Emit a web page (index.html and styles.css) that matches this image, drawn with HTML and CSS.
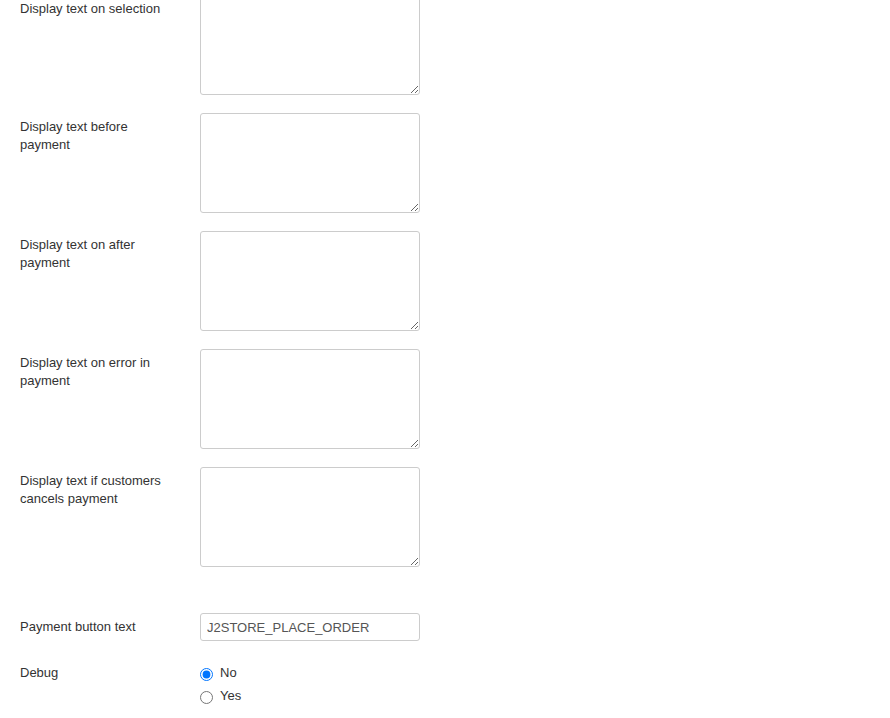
FILE: index.html
```html
<!DOCTYPE html>
<html>
<head>
<meta charset="utf-8">
<link rel="stylesheet" href="styles.css">
</head>
<body>
<form class="form">
  <div class="control-group">
    <label class="control-label">Display text on selection</label>
    <div class="controls"><textarea class="area"></textarea></div>
  </div>
  <div class="control-group">
    <label class="control-label">Display text before payment</label>
    <div class="controls"><textarea class="area"></textarea></div>
  </div>
  <div class="control-group">
    <label class="control-label">Display text on after payment</label>
    <div class="controls"><textarea class="area"></textarea></div>
  </div>
  <div class="control-group">
    <label class="control-label">Display text on error in payment</label>
    <div class="controls"><textarea class="area"></textarea></div>
  </div>
  <div class="control-group">
    <label class="control-label">Display text if customers cancels payment</label>
    <div class="controls"><textarea class="area"></textarea></div>
  </div>
  <div class="control-group spaced">
    <label class="control-label">Payment button text</label>
    <div class="controls"><input class="text-input" type="text" value="J2STORE_PLACE_ORDER"></div>
  </div>
  <div class="control-group">
    <label class="control-label">Debug</label>
    <div class="controls radios">
      <label class="radio"><input type="radio" name="debug" checked> <span>No</span></label>
      <label class="radio"><input type="radio" name="debug"> <span>Yes</span></label>
    </div>
  </div>
</form>
</body>
</html>
```
FILE: styles.css
```css
html, body {
  margin: 0;
  padding: 0;
  background: #fff;
}
body {
  font-family: "Liberation Sans", Arial, Helvetica, sans-serif;
  font-size: 13px;
  line-height: 18px;
  color: #333;
}
.form {
  margin: -5px 0 0 0;
  padding: 0 20px;
}
.control-group {
  display: flex;
  align-items: flex-start;
  margin-bottom: 18px;
}
.control-group.spaced {
  padding-top: 28px;
}
.control-label {
  width: 160px;
  padding-top: 5px;
  margin-right: 20px;
  flex: none;
}
.controls {
  flex: none;
}
.area {
  display: block;
  box-sizing: border-box;
  width: 220px;
  height: 100px;
  margin: 0;
  padding: 4px 6px;
  border: 1px solid #ccc;
  border-radius: 3px;
  font-family: inherit;
  font-size: 13px;
  color: #555;
  background: #fff;
}
.text-input {
  display: block;
  box-sizing: border-box;
  width: 220px;
  height: 28px;
  margin: 0;
  padding: 4px 6px;
  border: 1px solid #ccc;
  border-radius: 3px;
  font-family: inherit;
  font-size: 13px;
  color: #555;
  background: #fff;
}
.radios {
  display: flex;
  flex-direction: column;
  padding-top: 5px;
}
.radio {
  display: flex;
  align-items: center;
  height: 23px;
  margin-top: -3px;
  margin-bottom: 3px;
  font-size: 13px;
}
.radio input {
  width: 13px;
  height: 13px;
  margin: 3px 7px 0 0;
}
```
